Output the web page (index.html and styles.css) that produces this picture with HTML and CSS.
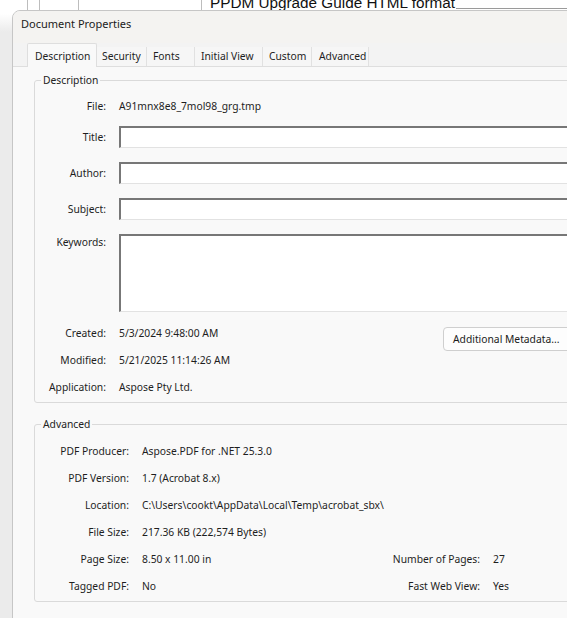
FILE: index.html
```html
<!DOCTYPE html>
<html>
<head>
<meta charset="utf-8">
<link rel="stylesheet" href="styles.css">
</head>
<body>
<div class="desk">
  <div class="behind">
    <span class="vline v1"></span>
    <span class="vline v2"></span>
    <span class="vline v3"></span>
    <span class="vline v4"></span>
    <span class="doc-title">PPDM Upgrade Guide HTML format</span>
    <span class="hline"></span>
  </div>
  <div class="dialog">
    <div class="titlebar">Document Properties</div>
    <div class="tabs">
      <div class="tab selected t-desc">Description</div>
      <div class="tab t-sec">Security</div>
      <div class="tab t-fonts">Fonts</div>
      <div class="tab t-init">Initial View</div>
      <div class="tab t-cust">Custom</div>
      <div class="tab t-adv">Advanced</div>
    </div>
    <div class="panel">
      <div class="group">
        <div class="group-title">Description</div>
        <div class="desc-rows">
          <div class="row r-file"><span class="label">File:</span><span class="value">A91mnx8e8_7mol98_grg.tmp</span></div>
          <div class="row r-input r-title"><span class="label">Title:</span><span class="field"></span></div>
          <div class="row r-input"><span class="label">Author:</span><span class="field"></span></div>
          <div class="row r-input"><span class="label">Subject:</span><span class="field"></span></div>
          <div class="row r-input r-keys"><span class="label">Keywords:</span><span class="field tall"></span></div>
          <div class="meta">
            <div class="meta-rows">
              <div class="row"><span class="label">Created:</span><span class="value">5/3/2024 9:48:00 AM</span></div>
              <div class="row"><span class="label">Modified:</span><span class="value">5/21/2025 11:14:26 AM</span></div>
              <div class="row"><span class="label">Application:</span><span class="value">Aspose Pty Ltd.</span></div>
            </div>
            <div class="button">Additional Metadata...</div>
          </div>
        </div>
      </div>
      <div class="group adv">
        <div class="group-title">Advanced</div>
        <div class="adv-grid">
          <span class="alabel">PDF Producer:</span><span class="avalue wide">Aspose.PDF for .NET 25.3.0</span>
          <span class="alabel">PDF Version:</span><span class="avalue wide">1.7 (Acrobat 8.x)</span>
          <span class="alabel">Location:</span><span class="avalue wide">C:\Users\cookt\AppData\Local\Temp\acrobat_sbx\</span>
          <span class="alabel">File Size:</span><span class="avalue wide">217.36 KB (222,574 Bytes)</span>
          <span class="alabel">Page Size:</span><span class="avalue">8.50 x 11.00 in</span><span class="alabel">Number of Pages:</span><span class="avalue">27</span>
          <span class="alabel">Tagged PDF:</span><span class="avalue">No</span><span class="alabel">Fast Web View:</span><span class="avalue">Yes</span>
        </div>
      </div>
    </div>
  </div>
</div>
</body>
</html>
```
FILE: styles.css
```css
* { box-sizing: border-box; }
html, body { margin: 0; padding: 0; }
body {
  width: 567px;
  height: 618px;
  overflow: hidden;
  font-family: "Noto Sans", "Open Sans", sans-serif;
  font-size: 10.3px;
  color: #1e1e1e;
}
.desk {
  position: relative;
  width: 567px;
  height: 618px;
  overflow: hidden;
  background: linear-gradient(to bottom, #ffffff 0, #ffffff 14px, #ebebeb 32px, #ebebeb 100%);
}
.behind {
  position: absolute;
  left: 0;
  top: 0;
  width: 567px;
  height: 14px;
}
.vline {
  position: absolute;
  top: 0;
  width: 1px;
  height: 14px;
  background: #bdbdbd;
}
.v1 { left: 27px; }
.v2 { left: 39px; }
.v3 { left: 78px; }
.v4 { left: 201px; }
.doc-title {
  position: absolute;
  left: 210px;
  top: -6px;
  font-family: "Liberation Sans", Arial, sans-serif;
  font-size: 15.3px;
  line-height: 18px;
  color: #111;
  white-space: nowrap;
}
.hline {
  position: absolute;
  left: 456px;
  top: 8px;
  width: 120px;
  height: 1px;
  background: #9a9a9a;
}
.dialog {
  position: absolute;
  left: 12px;
  top: 10px;
  width: 590px;
  height: 640px;
  border: 1px solid #c6c6c6;
  border-radius: 8px 8px 0 0;
  background: #f3f3f3;
  overflow: hidden;
}
.titlebar {
  height: 32px;
  padding-top: 1px;
  line-height: 24px;
  padding-left: 8px;
  font-size: 11px;
  color: #1b1b1b;
  background: #f4f3f1;
}
.tabs {
  display: flex;
  align-items: flex-end;
  height: 23px;
  padding-left: 14px;
}
.tab {
  height: 19px;
  line-height: 18px;
  padding-left: 6px;
  border-right: 1px solid #e1e1e1;
  white-space: nowrap;
  background: #f6f6f6;
}
.tab.selected {
  position: relative;
  height: 24px;
  line-height: 24px;
  margin-bottom: -1px;
  padding-left: 7px;
  background: #f9f9f9;
  border: 1px solid #dedede;
  border-bottom: none;
  border-radius: 2px 2px 0 0;
}
.t-desc { width: 70px; }
.t-sec { width: 50px; padding-left: 5px; }
.t-fonts { width: 48px; }
.t-init { width: 68px; }
.t-cust { width: 49px; }
.t-adv { width: 57px; padding-left: 7px; }
.panel {
  background: #f9f9f9;
  border-top: 1px solid #dedede;
  padding: 13px 0 40px 21px;
}
.group {
  width: 570px;
  border: 1px solid #dadada;
  border-radius: 3px;
  padding-bottom: 5px;
}
.group.adv { margin-top: 21px; }
.group-title {
  width: fit-content;
  margin-top: -8px;
  margin-left: 6px;
  padding: 0 2px;
  line-height: 14px;
  background: #f9f9f9;
  color: #222;
}
.desc-rows {
  display: flex;
  flex-direction: column;
}
.row {
  display: flex;
  align-items: center;
  gap: 13px;
  height: 20px;
  white-space: nowrap;
}
.label {
  flex: none;
  width: 71px;
  text-align: right;
}
.r-file { margin-top: 9px; }
.r-input { height: 22px; margin-top: 14px; }
.r-title { margin-top: 10px; }
.r-keys { height: 78px; align-items: flex-start; }
.r-keys .label { line-height: 16px; }
.field {
  flex: 1;
  height: 22px;
  margin-right: 20px;
  background: #ffffff;
  border-top: 2px solid #777777;
  border-left: 2px solid #777777;
  border-right: 1px solid #e2e2e2;
  border-bottom: 1px solid #e2e2e2;
}
.field.tall { height: 78px; }
.meta {
  display: flex;
  margin-top: 11px;
}
.meta-rows {
  width: 408px;
  display: flex;
  flex-direction: column;
  gap: 7px;
}
.button {
  flex: none;
  width: 130px;
  height: 24px;
  margin-top: 4px;
  padding-left: 9px;
  line-height: 22px;
  background: #fdfdfd;
  border: 1px solid #cfcfcf;
  border-radius: 4px;
  white-space: nowrap;
  color: #1b1b1b;
}
.adv-grid {
  display: grid;
  grid-template-columns: 94px 210px 115px 1fr;
  grid-auto-rows: 20px;
  column-gap: 13px;
  row-gap: 7px;
  margin-top: 10px;
  align-items: center;
  white-space: nowrap;
}
.alabel { text-align: right; }
.avalue.wide { grid-column: 2 / 5; }
```
